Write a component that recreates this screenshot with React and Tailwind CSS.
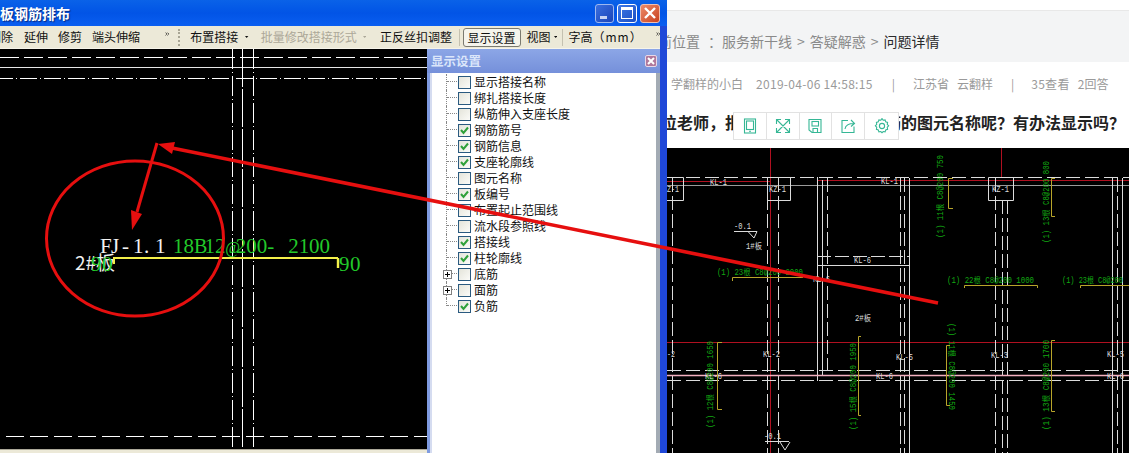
import React from "react";

const CJK = "font-['Noto_Sans_CJK_SC','Noto_Sans',sans-serif]";

// Layer tree rows of the display settings panel
const layers = [
  ["显示搭接名称", false],
  ["绑扎搭接长度", false],
  ["纵筋伸入支座长度", false],
  ["钢筋筋号", true],
  ["钢筋信息", true],
  ["支座轮廓线", true],
  ["图元名称", false],
  ["板编号", true],
  ["布置起止范围线", false],
  ["流水段参照线", false],
  ["搭接线", true],
  ["柱轮廓线", true],
  ["底筋", false, true],
  ["面筋", false, true],
  ["负筋", true],
];

function Chevrons({ className }) {
  return (
    <svg width="9" height="8" viewBox="0 0 9 8" className={className} fill="none" stroke="#111" strokeWidth="1.4">
      <path d="M1 1l3 3-3 3M5 1l3 3-3 3" />
    </svg>
  );
}

function Caret({ color = "#111", className }) {
  return (
    <svg width="7" height="4" viewBox="0 0 7 4" className={className}>
      <path d="M0 0h7L3.5 4z" fill={color} />
    </svg>
  );
}

function TitleButtons() {
  return (
    <div className="ml-auto mr-[7px] flex items-center gap-[3px]">
      <div className="flex h-[19px] w-[19px] items-end rounded-[3px] border border-[#9db8f0] bg-gradient-to-br from-[#3a6fe0] to-[#1c44b8] pb-[3px] pl-[4px]">
        <div className="h-[3px] w-[7px] bg-[#c8d4f4]" />
      </div>
      <div className="flex h-[19px] w-[20px] items-center justify-center rounded-[3px] border border-white bg-gradient-to-br from-[#3f78e6] to-[#1c4fc4]">
        <div className="h-[12px] w-[12px] border border-t-[3px] border-white" />
      </div>
      <div className="flex h-[19px] w-[20px] items-center justify-center rounded-[3px] border border-[#f0c0b0] bg-gradient-to-br from-[#ec8a68] to-[#c8401c]">
        <svg width="12" height="12" viewBox="0 0 12 12" stroke="#fff" strokeWidth="2.4" fill="none">
          <path d="M1 1l10 10M11 1L1 11" />
        </svg>
      </div>
    </div>
  );
}

function Toolbar() {
  return (
    <div className={`flex h-[23px] shrink-0 items-center overflow-hidden whitespace-nowrap border-b border-[#f6f4ea] bg-[#ece9d8] text-[12px] leading-none text-[#111] ${CJK}`}>
      <span className="ml-[-11px]">删除</span>
      <span className="ml-[11px]">延伸</span>
      <span className="ml-[10px]">修剪</span>
      <span className="ml-[10px]">端头伸缩</span>
      <Chevrons className="ml-[25px] mb-[6px]" />
      <div className="ml-[9px] h-[17px] w-[2px] border-l-2 border-dotted border-[#a8a594]" />
      <span className="ml-[10px]">布置搭接</span>
      <Caret className="ml-[7px]" />
      <span className="ml-[12px] text-[#aca899]">批量修改搭接形式</span>
      <Caret color="#aca899" className="ml-[6px]" />
      <span className="ml-[14px]">正反丝扣调整</span>
      <div className="ml-[7px] h-[17px] w-px bg-[#c4c1b0]" />
      <span className="ml-[3px] rounded-[3px] border border-[#7a7a70] bg-[#f5f4ec] px-[4px] py-[2px] leading-[13px]">显示设置</span>
      <span className="ml-[6px]">视图</span>
      <Caret className="ml-[3px]" />
      <div className="ml-[5px] h-[17px] w-px bg-[#c4c1b0]" />
      <span className="ml-[6px]">字高</span>
      <span className="tracking-[1px]">（mm）</span>
      <Chevrons className="ml-[13px] mb-[6px]" />
    </div>
  );
}

// Evenly spaced glyph positions, as the CAD fonts draw their digits
const stepped = (start, step, count) => Array.from({ length: count }, (_, i) => start + i * step).join(" ");

// Plan view shown in the rebar layout window
function RebarCanvas() {
  const serif = "font-['Liberation_Serif',serif]";
  return (
    <svg width="660" height="400" viewBox="0 49 660 400" className="block">
      <rect x="0" y="49" width="660" height="400" fill="#000" />
      <g stroke="#fff" strokeWidth="1" fill="none">
        <path d="M0 57.5H430" strokeDasharray="19 5" />
        <path d="M0 67.5H430" stroke="#e8e8e8" />
        <path d="M-4 78.5H430" strokeDasharray="17 3 1 3" />
        <path d="M6 436.5H430" strokeDasharray="18 6" />
        <path d="M232.5 49V447" strokeDasharray="20 3 1 3" />
        <path d="M242.5 49V447" strokeDasharray="38 2" />
        <path d="M253.5 49V447" strokeDasharray="20 3 1 3" />
      </g>
      <text x={stepped(100, 11, 6)} y="253" fontSize="21" fill="#f2f2f2" className={serif}>FJ-1.1</text>
      <text x={stepped(173, 10.47, 15)} y="253" fontSize="21" fill="#22c92a" className={serif}>
        18<tspan fontSize="20">B</tspan>12<tspan fontSize="16">@</tspan>200- 2100
      </text>
      <text x="75" y="270" fontSize="19" fill="#f2f2f2" className={CJK}>2#板</text>
      <text x={stepped(91, 11, 2)} y="271" fontSize="21" fill="#22c92a" className={serif}>90</text>
      <text x={stepped(339, 11, 2)} y="271" fontSize="21" fill="#22c92a" className={serif}>90</text>
      <path d="M113 258H338" stroke="#f4f04a" strokeWidth="2" />
      <path d="M338 258V268" stroke="#f4f04a" strokeWidth="2.4" />
      <path d="M114 258V264" stroke="#f4f04a" strokeWidth="2" />
    </svg>
  );
}

function DisplayDialog() {
  return (
    <div className={`absolute bottom-0 left-[427px] top-[49px] flex w-[233px] flex-col bg-[#7f9be0] ${CJK}`}>
      <div className="flex h-[24px] shrink-0 items-center bg-gradient-to-b from-[#8ca6e6] to-[#7590da] pl-[4px] pr-[3px]">
        <span className="text-[12.5px] font-bold text-[#dbe6fa]">显示设置</span>
        <div className="ml-auto flex h-[12px] w-[12px] items-center justify-center rounded-[2px] border border-[#e8d8e8] bg-[#b0789c]">
          <svg width="8" height="8" viewBox="0 0 8 8" stroke="#fff" strokeWidth="2" fill="none">
            <path d="M1 1l6 6M7 1L1 7" />
          </svg>
        </div>
      </div>
      <div className="ml-[3px] flex-1 border-l-[2px] border-r-[4px] border-l-[#d5dcf0] border-r-[#a3abb4] bg-white pl-[14px] pt-[1px] text-[12px] text-[#111]">
        {layers.map(([label, checked, expandable], i) => (
          <div key={label} className="flex h-[16px] items-center whitespace-nowrap leading-none">
            <div className={`relative w-[11px] self-start border-l border-dotted border-[#888] ${i === layers.length - 1 ? "h-[8px]" : "h-[16px]"}`}>
              <div className="h-[8px] border-b border-dotted border-[#888]" />
              {expandable && (
                <div className="absolute left-[-4px] top-[4px] flex h-[9px] w-[9px] items-center justify-center border border-[#808080] bg-white">
                  <svg width="5" height="5" viewBox="0 0 5 5" stroke="#000">
                    <path d="M0 2.5h5M2.5 0v5" />
                  </svg>
                </div>
              )}
            </div>
            <div className="ml-px flex h-[13px] w-[13px] items-center justify-center border border-[#2a5a80] bg-gradient-to-br from-[#e4e4da] to-[#fbfbf8]">
              {checked && (
                <svg width="9" height="9" viewBox="0 0 9 9" fill="none" stroke="#2fa13a" strokeWidth="2">
                  <path d="M1 4l2.5 3L8 1.5" />
                </svg>
              )}
            </div>
            <span className="ml-[3px]">{label}</span>
          </div>
        ))}
      </div>
    </div>
  );
}

function SoftwareWindow() {
  return (
    <div className="relative flex h-full w-[667px] shrink-0 flex-col bg-[#1f48d8]">
      <div className={`flex h-[26px] shrink-0 items-center bg-gradient-to-b from-[#0a62e8] via-[#0254e6] to-[#0a5ef0] text-[14px] font-bold text-white [text-shadow:1px_1px_1px_#0a2a80] ${CJK}`}>
        <span>板钢筋排布</span>
        <TitleButtons />
      </div>
      <div className="flex w-[660px] flex-1 flex-col overflow-hidden bg-[#ece9d8]">
        <Toolbar />
        <RebarCanvas />
        <div className="flex-1 border-t border-[#aca899]" />
      </div>
      <DisplayDialog />
    </div>
  );
}

const WHITE = "#dcdcdc";
const GREEN = "#12a812";
const CAD_FONT = "font-['Liberation_Mono','Noto_Sans_CJK_SC',monospace]";

// Vertical rebar note, rotated along its bracket
function VNote({ x, y, length, text, flip }) {
  return (
    <text
      x="0"
      y="0"
      fontSize="8.5"
      fill={GREEN}
      textLength={length}
      lengthAdjust="spacingAndGlyphs"
      transform={`translate(${x} ${y}) rotate(${flip ? 90 : -90})`}
      className={CAD_FONT}
    >
      {text}
    </text>
  );
}

function Label({ x, y, children, fill = WHITE, length = 17 }) {
  return (
    <text x={x} y={y} fontSize="8.5" fill={fill} textLength={length} lengthAdjust="spacingAndGlyphs" className={CAD_FONT}>
      {children}
    </text>
  );
}

// Structural plan embedded in the question page
function PlanDrawing() {
  return (
    <svg width="462" height="305" viewBox="667 148 462 305" className="block">
      <rect x="667" y="148" width="462" height="305" fill="#000" />
      <g stroke="#b01020" fill="none">
        <path d="M770.5 148V453M1001.5 148V178M667 342.5H1129" />
        <path d="M817 180.5H1129M667 181.5H770" />
      </g>
      <path d="M667 185.5H1129" stroke="#9a9a9a" />
      <g stroke={WHITE} fill="none">
        <path d="M667 177.5H1129" strokeDasharray="14 5" />
        <path d="M667 370.5H1129" strokeDasharray="14 5" />
        <path d="M667 380.5H1129" strokeDasharray="14 5" />
        <path d="M672.5 178V453M767.5 178V453M778.5 178V453M827.5 178V370M900.5 178V453M904.5 178V453M995.5 178V453M1002.5 200V453M1007.5 200V453M1117.5 178V453" strokeDasharray="14 4" />
        <path d="M817.5 177V381M822.5 180V376M909.5 178V453M1112.5 177V453M1122.5 178V453" />
        <path d="M667 177.5H683.5V200.5H667M767.5 177.5H790.5V200.5H767.5ZM988.5 177.5H1013.5V200.5H988.5Z" />
        <path d="M817 256.5H909" strokeDasharray="14 4" />
        <path d="M817 265.5H909" />
        <path d="M734 231.5H757M748 231.5L754 238L757 231.5" />
        <path d="M765 441.5H789M780 442L785 450L790 442" />
      </g>
      <path d="M667 375.5H1129" stroke="#f4b0c0" strokeWidth="1.4" />
      <g>
        <Label x="710" y="185">KL-1</Label>
        <Label x="667" y="192" length={12}>Z-1</Label>
        <Label x="769" y="192">KZ-1</Label>
        <Label x="881" y="184">KL-1</Label>
        <Label x="992" y="192">KZ-1</Label>
        <Label x="854" y="263">KL-6</Label>
        <Label x="813" y="282">KL-6</Label>
        <Label x="734" y="229">-0.1</Label>
        <Label x="746" y="249" length={16}>1#板</Label>
        <Label x="855" y="321" length={16}>2#板</Label>
        <Label x="667" y="357" length={8}>-2</Label>
        <Label x="763" y="357">KL-2</Label>
        <Label x="705" y="379">KL-6</Label>
        <Label x="876" y="379">KL-6</Label>
        <Label x="896" y="360">KL-5</Label>
        <Label x="991" y="358">KL-3</Label>
        <Label x="1107" y="357">KL-5</Label>
        <Label x="1107" y="379">KL-6</Label>
        <Label x="764" y="439">-0.1</Label>
      </g>
      <g>
        <Label x="717" y="275" fill={GREEN} length={86}>(1) 23根 C8@200  2000</Label>
        <Label x="947" y="283" fill={GREEN} length={87}>(1) 22根 C8@200  1000</Label>
        <Label x="1062" y="283" fill={GREEN} length={61}>(1) 23根 C8@200</Label>
        <VNote x={713} y={428} length={87} text="(1) 12根 C8@200  1650" />
        <VNote x={856} y={430} length={87} text="(1) 15根 C8@200  1950" />
        <VNote x={943} y={238} length={83} text="(1) 11根 C8@200  750" />
        <VNote x={1049} y={243} length={82} text="(1) 13根 C8@200  800" />
        <VNote x={949} y={323} length={87} text="(1) 11根 C8@200  1450" flip />
        <VNote x={1049} y={430} length={90} text="(1) 13根 C8@200  1700" />
      </g>
      <g stroke="#b8a52a" fill="none">
        <path d="M732.5 281V277.5H803" />
        <path d="M964.5 288V285.5H1037.5V288" />
        <path d="M1080.5 288V285.5H1129" />
        <path d="M722 342.5H717.5V409.5H722" />
        <path d="M861 336.5H858.5V415.5H861" />
        <path d="M953 178.5H948.5V208.5H953" />
        <path d="M1055 178.5H1051.5V216.5H1055" />
        <path d="M950 345.5H946.5V405.5H950" />
        <path d="M1055 340.5H1051.5V411.5H1055" />
      </g>
    </svg>
  );
}

function FloatingTools() {
  const cell = "flex h-full w-[33px] items-center justify-center border-r border-[#e2e2e2] last:border-r-0";
  const icon = { width: 16, height: 16, viewBox: "0 0 16 16", fill: "none", stroke: "#35b795", strokeWidth: 1.1 };
  return (
    <div className="absolute left-[66px] top-[6px] flex h-[28px] w-[166px] border border-[#e2e2e2] bg-white">
      <div className={cell}>
        <svg {...icon}>
          <rect x="2.5" y="1" width="11" height="14" />
          <rect x="4.5" y="3" width="7" height="8.5" />
          <path d="M7 13.3h2" />
        </svg>
      </div>
      <div className={cell}>
        <svg {...icon}>
          <path d="M1.5 1.5L14.5 14.5M14.5 1.5L1.5 14.5M1.5 6V1.5H6M10 1.5H14.5V6M1.5 10V14.5H6M10 14.5H14.5V10" />
        </svg>
      </div>
      <div className={cell}>
        <svg {...icon}>
          <path d="M2 1.5H14V14.5H5L2 12Z" />
          <rect x="5" y="3.5" width="6.5" height="4.5" />
          <path d="M6 14.5V10.5H10.5V14.5" />
        </svg>
      </div>
      <div className={cell}>
        <svg {...icon}>
          <path d="M8 2.5H2V14.5H14V8.5" />
          <path d="M5 11C5.5 7.5 8 5.5 14 5.5M11 2L14.5 5.5L11 8.5" />
        </svg>
      </div>
      <div className={cell}>
        <svg {...icon}>
          <path d="M8 1l1.2 1.7 2.1-.3.6 2 2 .7-.4 2.1L15 8.7l-1.5 1.5.4 2.1-2 .7-.6 2-2.1-.3L8 16l-1.2-1.3-2.1.3-.6-2-2-.7.4-2.1L1 8.7l1.5-1.5-.4-2.1 2-.7.6-2 2.1.3Z" transform="translate(0.4 -0.4) scale(0.95)" />
          <circle cx="8" cy="8" r="2.6" />
        </svg>
      </div>
    </div>
  );
}

function QuestionPage() {
  return (
    <div className={`flex h-full w-[462px] flex-col overflow-hidden bg-white ${CJK}`}>
      <div className="mt-[10px] flex h-[52px] shrink-0 items-center whitespace-nowrap border-t border-[#e8e8e8] bg-[#f3f4f5] pt-[10px] text-[14px] text-[#8a8a8a]">
        <span className="ml-[-23px]">当前位置</span>
        <span className="ml-[8px]">：</span>
        <span>服务新干线</span>
        <span className="ml-[5px]">&gt;</span>
        <span className="ml-[5px]">答疑解惑</span>
        <span className="ml-[5px]">&gt;</span>
        <span className="ml-[5px] text-[#2a2a2a]">问题详情</span>
      </div>
      <div className="flex h-[44px] shrink-0 items-center whitespace-nowrap pl-[4px] text-[12px] text-[#9a9a9a]">
        <span>学翻样的小白</span>
        <span className="ml-[13px] tracking-[0.3px]">2019-04-06 14:58:15</span>
        <span className="ml-[19px]">|</span>
        <span className="ml-[18px]">江苏省</span>
        <span className="ml-[8px]">云翻样</span>
        <span className="ml-[18px]">|</span>
        <span className="ml-[17px] tracking-[0.3px]">35查看</span>
        <span className="ml-[8px]">2回答</span>
      </div>
      <div className="relative h-[42px] shrink-0 whitespace-nowrap">
        <div className="ml-[-22px] pt-[6px] text-[16px] font-bold leading-[20px] text-[#222]">各位老师，批有图上怎么不显示负筋的图元名称呢？有办法显示吗？</div>
        <FloatingTools />
      </div>
      <PlanDrawing />
    </div>
  );
}

// Hand-drawn annotation lying over both windows
function Annotations() {
  return (
    <svg width="1129" height="453" viewBox="0 0 1129 453" className="pointer-events-none absolute left-0 top-0" fill="none">
      <ellipse cx="135" cy="238.5" rx="88.5" ry="77.5" stroke="#e60f0f" strokeWidth="3" />
      <path d="M157 143L137 212" stroke="#e60f0f" strokeWidth="3" />
      <path d="M132 230L131 210L142 214Z" fill="#e60f0f" />
      <path d="M938 303L172 148" stroke="#e60f0f" strokeWidth="3.6" />
      <path d="M158 144L175 142L172 154Z" fill="#e60f0f" />
    </svg>
  );
}

export default function App() {
  return (
    <div className="relative flex h-[453px] w-[1129px] overflow-hidden bg-white">
      <SoftwareWindow />
      <QuestionPage />
      <Annotations />
    </div>
  );
}
